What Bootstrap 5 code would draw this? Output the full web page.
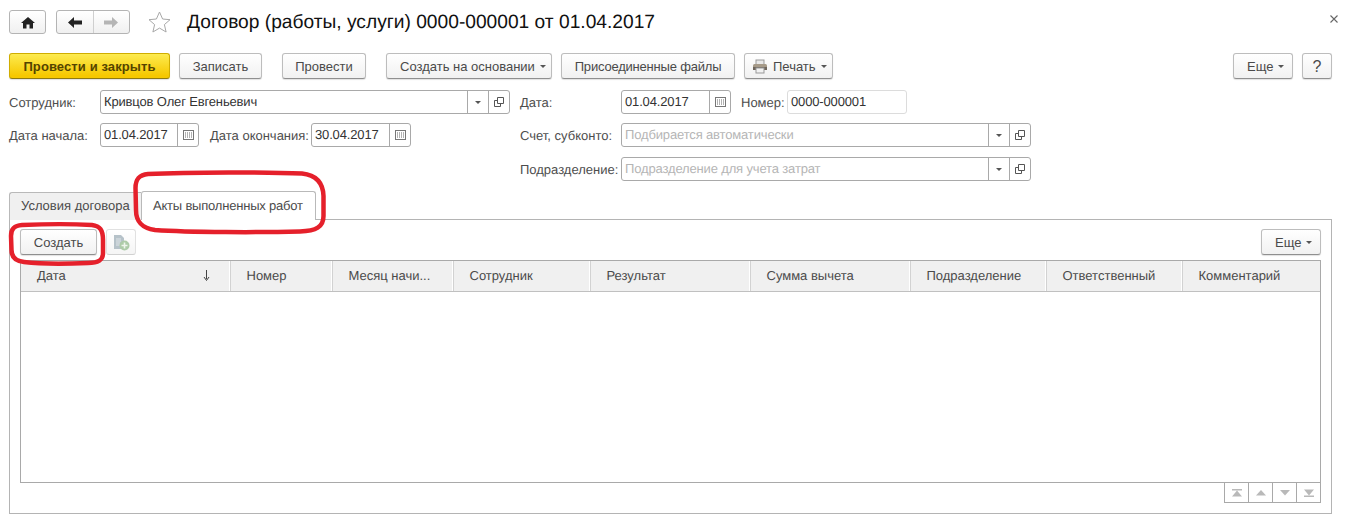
<!DOCTYPE html>
<html lang="ru">
<head>
<meta charset="utf-8">
<title>Договор</title>
<link href="https://cdn.jsdelivr.net/npm/bootstrap@5.3.0/dist/css/bootstrap.min.css" rel="stylesheet">
<style>
html,body{height:100%;}
body{font-family:"Liberation Sans",Arial,sans-serif;font-size:13px;color:#4a4a4a;background:#fff;overflow:hidden;line-height:15px;text-rendering:geometricPrecision;}
.page-wrap{position:relative;width:1345px;height:523px;padding:10px 13px 0 9px;}
.tbtn{--bs-btn-padding-x:0;--bs-btn-padding-y:0;--bs-btn-font-size:13px;--bs-btn-color:#4a4a4a;--bs-btn-border-radius:3px;--bs-btn-line-height:15px;height:26px;background:linear-gradient(#fff,#f1f1f1);border:1px solid #bdbdbd;border-bottom-color:#8f8f8f;box-shadow:0 1px 1px rgba(0,0,0,.12);display:inline-flex;align-items:center;justify-content:center;flex:none;}
.tbtn:hover{color:#4a4a4a;border-color:#bdbdbd;}
.nav-btn{height:24px;border:1px solid #b4b4b4;border-radius:3px;background:linear-gradient(#fff,#f0f0f0);display:flex;flex:none;overflow:hidden;}
.nav-cell{width:100%;display:flex;align-items:center;justify-content:center;}
.nav-cell+.nav-cell{border-left:1px solid #cfcfcf;}
.doc-title{font-size:19.2px;line-height:24px;color:#111;margin-left:16px;padding-top:2px;}
.close-x{margin-left:auto;margin-right:-6px;margin-bottom:6px;}
.top-bar{height:24px;}
.cmd-bar{margin-top:19px;height:26px;}
.yellow{background:linear-gradient(#fdeb50,#f6c800 90%);border-color:#d0ad00;border-bottom-color:#8f7a10;color:#544400;font-weight:700;width:161px;--bs-btn-color:#544400;letter-spacing:.1px;}
.yellow:hover{color:#544400;border-color:#d0ad00;}
.dd{justify-content:flex-start;padding-left:13px;}
.dd::after{content:"";display:inline-block;margin-left:5px;border-top:3px solid #555;border-left:3px solid transparent;border-right:3px solid transparent;}
.tight-txt{letter-spacing:-.2px;}
.form-area{margin-top:11px;height:92px;}
.form-left{width:511px;flex:none;}
.f-row{display:flex;align-items:center;height:24px;margin-bottom:10px;}
.f-row.tight{margin-bottom:9px;}
.lab{flex:none;white-space:nowrap;color:#4d4d4d;}
.fld{height:24px;border:1px solid #a9a9a9;border-radius:3px;display:flex;align-items:stretch;flex:none;background:#fff;color:#333;}
.fld.soft{border-color:#dcdcdc;}
.fld-text{flex:1;padding-left:3px;line-height:22px;white-space:nowrap;overflow:hidden;letter-spacing:-.15px;}
.fld-text.ph{color:#b5b5b5;}
.fld-btn{width:21px;border-left:1px solid #a9a9a9;display:flex;align-items:center;justify-content:center;flex:none;}
.tri{width:0;height:0;border-top:3px solid #555;border-left:3px solid transparent;border-right:3px solid transparent;}
.w-label{width:91px;}
.w-right-label{width:101px;}
.tabs-row{margin-top:9px;height:29px;padding:0;border:0;position:relative;z-index:1;}
.tabs-row .tab-a{height:28px;width:132px;padding:0 0 0 11px;line-height:26px;background:#f0f0f0;border:1px solid #b9b9b9;border-bottom:0;border-right:0;border-radius:3px 0 0 0;color:#4a4a4a;font-size:13px;margin:0;white-space:nowrap;}
.tabs-row .tab-b{height:29px;width:175px;padding:0 0 0 11px;line-height:27px;background:#fff;border:1px solid #b9b9b9;border-bottom:0;border-radius:3px 3px 0 0;color:#4a4a4a;font-size:13px;margin:0;text-align:left;white-space:nowrap;letter-spacing:-.2px;}
.tab-panel{margin-top:-1px;height:295px;border:1px solid #b4b4b4;padding:9px 10px 0 10px;}
.panel-bar{height:26px;}
.icon-only{width:30px;margin-left:9px;opacity:.95;background:linear-gradient(#fff,#f5f5f5);border-color:#e0e0e0;border-bottom-color:#cfcfcf;box-shadow:none;}
.more-r{width:60px;margin-left:auto;}
.grid-frame{margin-top:5px;height:223px;border:1px solid #a9a9a9;overflow:hidden;}
.grid-tbl{table-layout:fixed;width:1299px;margin:0;--bs-table-bg:transparent;}
.grid-tbl th{height:30px;padding:0 0 0 16px;background:#f0f0f0;font-weight:400;color:#4a4a4a;border:0;border-bottom:1px solid #c0c0c0;border-right:1px solid #d2d2d2;box-shadow:inset -1px 0 0 #fff;vertical-align:middle;white-space:nowrap;font-size:13px;}
.grid-tbl th:last-child{border-right:0;box-shadow:none;}
.sort-head{padding-right:20px;}
.pager{display:flex;justify-content:flex-end;margin-top:-1px;}
.pg-cell{width:25px;height:21px;border:1px solid #a9a9a9;margin-left:-1px;display:flex;align-items:center;justify-content:center;background:#fff;flex:none;}
.pg-box{width:97px;display:flex;padding-left:1px;}
.annot{position:absolute;left:0;top:0;pointer-events:none;z-index:5;}
</style>
</head>
<body>
<div class="page-wrap">
  <div class="top-bar d-flex align-items-center">
    <div class="nav-btn" style="width:37px"><div class="nav-cell">
      <svg width="14" height="13" viewBox="0 0 14 13"><path d="M7 1 L14 7 H12 V12.5 H8.5 V8.5 H5.5 V12.5 H2 V7 H0 Z" fill="#222"/></svg>
    </div></div>
    <div class="nav-btn" style="width:74px;margin-left:10px">
      <div class="nav-cell"><svg width="14" height="11" viewBox="0 0 14 11"><path d="M0 5.500 L6 0 V3.500 H14 V7.500 H6 V11 Z" fill="#222"/></svg></div>
      <div class="nav-cell"><svg width="14" height="11" viewBox="0 0 14 11"><path d="M14 5.500 L8 0 V3.500 H0 V7.500 H8 V11 Z" fill="#b5b5b5"/></svg></div>
    </div>
    <svg style="margin-left:18px;flex:none" width="23" height="22" viewBox="0 0 23 22"><path d="M11.500 1 L14.600 8 L22 8.700 L16.400 13.600 L18.100 21 L11.500 17.100 L4.900 21 L6.600 13.600 L1 8.700 L8.400 8 Z" fill="none" stroke="#a8a8a8"/></svg>
    <div class="doc-title">Договор (работы, услуги) 0000-000001 от 01.04.2017</div>
    <svg class="close-x" width="8" height="8" viewBox="0 0 8 8"><path d="M.5 .5 L7.500 7.500 M7.500 .5 L.5 7.500" stroke="#666" stroke-width="1.1"/></svg>
  </div>

  <div class="cmd-bar d-flex">
    <button class="btn tbtn yellow">Провести и закрыть</button>
    <button class="btn tbtn" style="width:83px;margin-left:9px">Записать</button>
    <button class="btn tbtn" style="width:84px;margin-left:20px">Провести</button>
    <button class="btn tbtn dd" style="width:166px;margin-left:20px">Создать на основании</button>
    <button class="btn tbtn tight-txt" style="width:174px;margin-left:9px">Присоединенные файлы</button>
    <button class="btn tbtn dd print-btn" style="width:89px;margin-left:9px;padding-left:7px">
      <svg style="margin-right:5px" width="16" height="15" viewBox="0 0 16 15"><rect x="4" y="1" width="8" height="5" fill="#e8e8e8" stroke="#999"/><rect x="1" y="5" width="14" height="6" rx="1.500" fill="#a69a88"/><rect x="1" y="8" width="14" height="3" fill="#6f665c"/><rect x="4" y="9" width="8" height="5" fill="#f2f2f2" stroke="#999"/></svg>Печать</button>
    <button class="btn tbtn dd ms-auto" style="width:60px">Еще</button>
    <button class="btn tbtn" style="width:30px;margin-left:9px;font-size:16px">?</button>
  </div>

  <div class="form-area d-flex">
    <div class="form-left">
      <div class="f-row tight">
        <div class="lab w-label">Сотрудник:</div>
        <div class="fld" style="width:410px">
          <div class="fld-text">Кривцов Олег Евгеньевич</div>
          <div class="fld-btn"><span class="tri"></span></div>
          <div class="fld-btn"><svg width="10" height="10" viewBox="0 0 10 10"><path d="M3.500 .5h6v6h-6z M.5 3.500h3 M.5 3.500v6h6v-3" fill="none" stroke="#555"/></svg></div>
        </div>
      </div>
      <div class="f-row">
        <div class="lab w-label">Дата начала:</div>
        <div class="fld" style="width:99px">
          <div class="fld-text">01.04.2017</div>
          <div class="fld-btn"><svg width="11" height="10" viewBox="0 0 11 10"><rect x=".5" y=".5" width="10" height="9" fill="#fff" stroke="#777"/><path d="M2 3h7M2 5h7M2 7h7" stroke="#666" stroke-dasharray="1 1"/></svg></div>
        </div>
        <div class="lab" style="margin-left:11px;width:101px">Дата окончания:</div>
        <div class="fld" style="width:100px">
          <div class="fld-text">30.04.2017</div>
          <div class="fld-btn"><svg width="11" height="10" viewBox="0 0 11 10"><rect x=".5" y=".5" width="10" height="9" fill="#fff" stroke="#777"/><path d="M2 3h7M2 5h7M2 7h7" stroke="#666" stroke-dasharray="1 1"/></svg></div>
        </div>
      </div>
    </div>
    <div class="form-right">
      <div class="f-row tight">
        <div class="lab w-right-label">Дата:</div>
        <div class="fld" style="width:110px">
          <div class="fld-text">01.04.2017</div>
          <div class="fld-btn"><svg width="11" height="10" viewBox="0 0 11 10"><rect x=".5" y=".5" width="10" height="9" fill="#fff" stroke="#777"/><path d="M2 3h7M2 5h7M2 7h7" stroke="#666" stroke-dasharray="1 1"/></svg></div>
        </div>
        <div class="lab" style="margin-left:10px;width:46px">Номер:</div>
        <div class="fld soft" style="width:120px"><div class="fld-text">0000-000001</div></div>
      </div>
      <div class="f-row">
        <div class="lab w-right-label">Счет, субконто:</div>
        <div class="fld" style="width:410px">
          <div class="fld-text ph">Подбирается автоматически</div>
          <div class="fld-btn"><span class="tri"></span></div>
          <div class="fld-btn"><svg width="10" height="10" viewBox="0 0 10 10"><path d="M3.500 .5h6v6h-6z M.5 3.500h3 M.5 3.500v6h6v-3" fill="none" stroke="#555"/></svg></div>
        </div>
      </div>
      <div class="f-row">
        <div class="lab w-right-label">Подразделение:</div>
        <div class="fld" style="width:410px">
          <div class="fld-text ph">Подразделение для учета затрат</div>
          <div class="fld-btn"><span class="tri"></span></div>
          <div class="fld-btn"><svg width="10" height="10" viewBox="0 0 10 10"><path d="M3.500 .5h6v6h-6z M.5 3.500h3 M.5 3.500v6h6v-3" fill="none" stroke="#555"/></svg></div>
        </div>
      </div>
    </div>
  </div>

  <ul class="nav tabs-row align-items-end">
    <li><a class="nav-link tab-a" href="#">Условия договора</a></li>
    <li><a class="nav-link tab-b active" href="#">Акты выполненных работ</a></li>
  </ul>
  <div class="tab-panel">
    <div class="panel-bar d-flex">
      <button class="btn tbtn" style="width:77px">Создать</button>
      <button class="btn tbtn icon-only">
        <svg width="18" height="17" viewBox="0 0 18 17"><path d="M2 1h7l3 3v11H2z" fill="#b3bfc7"/><path d="M4 5h5M4 7h5M4 9h4M4 11h4" stroke="#dfe5e8"/><circle cx="12.500" cy="11.500" r="5" fill="#a9c9a4"/><path d="M12.500 8.500v6M9.500 11.500h6" stroke="#eef5ec" stroke-width="1.600"/></svg>
      </button>
      <button class="btn tbtn dd more-r">Еще</button>
    </div>
    <div class="grid-frame">
      <table class="table grid-tbl">
        <colgroup><col style="width:209px"><col style="width:102px"><col style="width:121px"><col style="width:137px"><col style="width:160px"><col style="width:160px"><col style="width:136px"><col style="width:136px"><col style="width:138px"></colgroup>
        <thead><tr>
          <th><div class="d-flex justify-content-between align-items-center sort-head"><span>Дата</span><svg width="7" height="11" viewBox="0 0 7 11"><path d="M3.500 0v9M1 7l2.500 3.500L6 7" fill="none" stroke="#444"/></svg></div></th>
          <th>Номер</th><th>Месяц начи...</th><th>Сотрудник</th><th>Результат</th><th>Сумма вычета</th><th>Подразделение</th><th>Ответственный</th><th>Комментарий</th>
        </tr></thead>
      </table>
    </div>
    <div class="pager">
      <div class="pg-box">
        <div class="pg-cell"><svg width="12" height="8" viewBox="0 0 12 8"><path d="M1 0h10v1.500H1zM6 1.500L11 7.500H1z" fill="#b9b9b9"/></svg></div>
        <div class="pg-cell"><svg width="12" height="6" viewBox="0 0 12 6"><path d="M6 0L11 5.500H1z" fill="#b9b9b9"/></svg></div>
        <div class="pg-cell"><svg width="12" height="6" viewBox="0 0 12 6"><path d="M6 5.500L11 0H1z" fill="#b9b9b9"/></svg></div>
        <div class="pg-cell"><svg width="12" height="8" viewBox="0 0 12 8"><path d="M1 6.500h10V8H1zM6 6.500L11 .5H1z" fill="#b9b9b9"/></svg></div>
      </div>
    </div>
  </div>

  <svg class="annot" width="1345" height="523" viewBox="0 0 1345 523" fill="none" stroke="#e5202b" stroke-width="4.500" stroke-linecap="round">
    <path d="M148 174 C190 172 270 172 302 173.500 C316 175 323 182 323.500 196 L323.500 216 C323.500 227 316 231 300 231.500 C260 232.500 190 232.500 155 230 C142 228 136 222 136 210 L135.500 188 C135.500 179 139 175 148 174 Z"/>
    <path d="M22 225 C45 224 75 224 92 225 C100 226 103 230 103 240 L103 253 C103 260 99 263 88 263 C65 264 40 264 24 262 C15 261 11.500 257 11.500 250 L11 236 C11 229 14 225.500 22 225 Z"/>
  </svg>
</div>
<script src="https://cdn.jsdelivr.net/npm/bootstrap@5.3.0/dist/js/bootstrap.bundle.min.js"></script>
</body>
</html>
